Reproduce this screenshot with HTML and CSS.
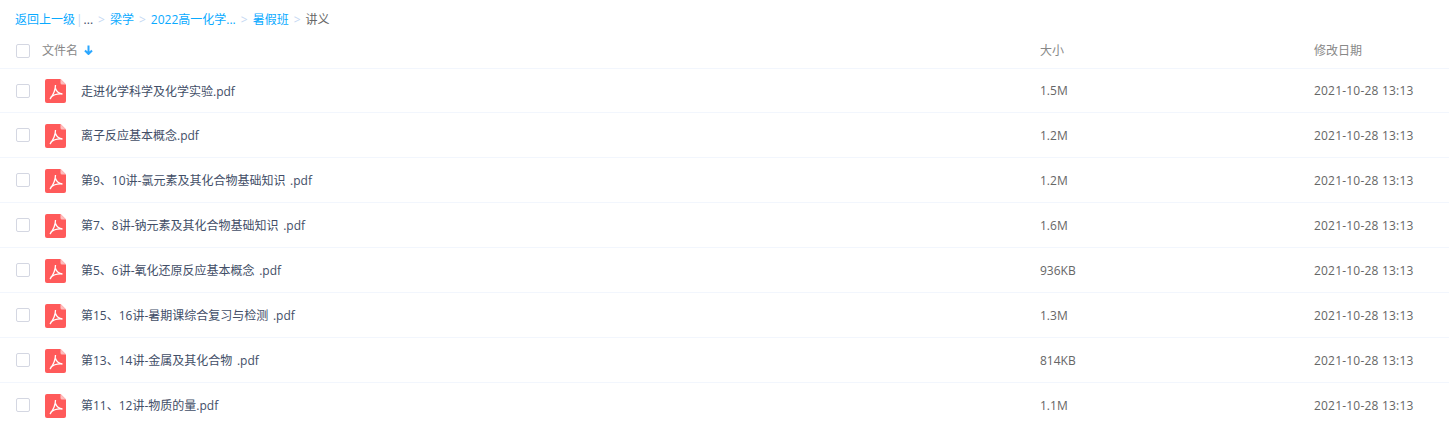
FILE: index.html
```html
<!DOCTYPE html>
<html lang="zh-CN">
<head>
  <meta charset="UTF-8">
  <meta name="viewport" content="width=device-width, initial-scale=1.0">
  <title>讲义</title>
  <link rel="stylesheet" href="styles.css">
</head>
<body>
  <svg class="defs" width="0" height="0">
    <symbol id="pdf" viewBox="0 0 21 24">
      <path d="M2 0H15.500L21 5.500V22a2 2 0 0 1-2 2H2a2 2 0 0 1-2-2V2a2 2 0 0 1 2-2z" fill="#ff5a5a"/>
      <path d="M15.500 0L21 5.500H17a1.500 1.500 0 0 1-1.500-1.500z" fill="#ffbdbd"/>
      <path d="M10.500 6C10.500 10 10 13.500 5 20M5.500 18.500C8.500 15.500 12 14.500 17.500 15M10.500 9.500C11.500 12.500 14 14.500 17.500 15" fill="none" stroke="#fff" stroke-width="1.300"/>
    </symbol>
  </svg>

  <div class="crumbs">
    <a>返回上一级</a><span class="bar">|</span><span class="dots">...</span><span class="sep">&gt;</span>
    <a>梁学</a><span class="sep">&gt;</span>
    <a>2022高一化学...</a><span class="sep">&gt;</span>
    <a>暑假班</a><span class="sep">&gt;</span>
    <span class="current">讲义</span>
  </div>

  <div class="row head">
    <span class="check"></span>
    <div class="name">文件名
      <svg class="arrow" width="9" height="10" viewBox="0 0 9 10"><path d="M4.500 0.500V9M1 5.500L4.500 9L8 5.500" fill="none" stroke="#2ba7ff" stroke-width="2"/></svg>
    </div>
    <div class="label">大小</div>
    <div class="label">修改日期</div>
  </div>

  <div class="row">
    <span class="check"></span>
    <div class="name"><svg class="icon"><use href="#pdf"/></svg>走进化学科学及化学实验.pdf</div>
    <div>1.5M</div>
    <div class="date">2021-10-28 13:13</div>
  </div>
  <div class="row">
    <span class="check"></span>
    <div class="name"><svg class="icon"><use href="#pdf"/></svg>离子反应基本概念.pdf</div>
    <div>1.2M</div>
    <div class="date">2021-10-28 13:13</div>
  </div>
  <div class="row">
    <span class="check"></span>
    <div class="name"><svg class="icon"><use href="#pdf"/></svg>第9、10讲-氯元素及其化合物基础知识 .pdf</div>
    <div>1.2M</div>
    <div class="date">2021-10-28 13:13</div>
  </div>
  <div class="row">
    <span class="check"></span>
    <div class="name"><svg class="icon"><use href="#pdf"/></svg>第7、8讲-钠元素及其化合物基础知识 .pdf</div>
    <div>1.6M</div>
    <div class="date">2021-10-28 13:13</div>
  </div>
  <div class="row">
    <span class="check"></span>
    <div class="name"><svg class="icon"><use href="#pdf"/></svg>第5、6讲-氧化还原反应基本概念 .pdf</div>
    <div>936KB</div>
    <div class="date">2021-10-28 13:13</div>
  </div>
  <div class="row">
    <span class="check"></span>
    <div class="name"><svg class="icon"><use href="#pdf"/></svg>第15、16讲-暑期课综合复习与检测 .pdf</div>
    <div>1.3M</div>
    <div class="date">2021-10-28 13:13</div>
  </div>
  <div class="row">
    <span class="check"></span>
    <div class="name"><svg class="icon"><use href="#pdf"/></svg>第13、14讲-金属及其化合物 .pdf</div>
    <div>814KB</div>
    <div class="date">2021-10-28 13:13</div>
  </div>
  <div class="row">
    <span class="check"></span>
    <div class="name"><svg class="icon"><use href="#pdf"/></svg>第11、12讲-物质的量.pdf</div>
    <div>1.1M</div>
    <div class="date">2021-10-28 13:13</div>
  </div>
</body>
</html>
```

FILE: styles.css
```css
body {
  margin: 0;
  font-family: "Open Sans", "Noto Sans CJK SC", sans-serif;
  font-size: 12px;
  color: #666;
  background: #fff;
  overflow: hidden;
}
.defs {
  position: absolute;
}
.crumbs {
  display: flex;
  align-items: center;
  height: 38px;
  padding-left: 15px;
  color: #666;
}
.crumbs a {
  color: #09aaff;
}
.bar {
  margin: 0 1px;
  color: #c5d8f3;
}
.dots {
  color: #424e67;
}
.sep {
  margin: 0 5px;
  color: #c5d8f3;
}
.row {
  display: grid;
  grid-template-columns: 26px 998px 274px 1fr;
  align-items: center;
  height: 44px;
  padding-left: 16px;
  border-bottom: 1px solid #f2f6fd;
}
.row.head {
  height: 26px;
  padding-bottom: 4px;
  color: #888;
}
.head + .row {
  height: 43px;
}
.check {
  width: 12px;
  height: 12px;
  border: 1px solid #d4d7e2;
  border-radius: 2px;
}
.name {
  display: flex;
  align-items: center;
  color: #424e67;
  white-space: pre;
  word-spacing: 1.5px;
}
.head .name {
  color: #888;
  white-space: normal;
  margin-top: -2px;
}
.label {
  margin-top: -2px;
}
.icon {
  width: 21px;
  height: 24px;
  margin: 2px 15px 0 3px;
}
.head + .row .icon {
  margin-top: 1px;
}
.arrow {
  margin-left: 6px;
}
.date {
  letter-spacing: 0.2px;
}
```
